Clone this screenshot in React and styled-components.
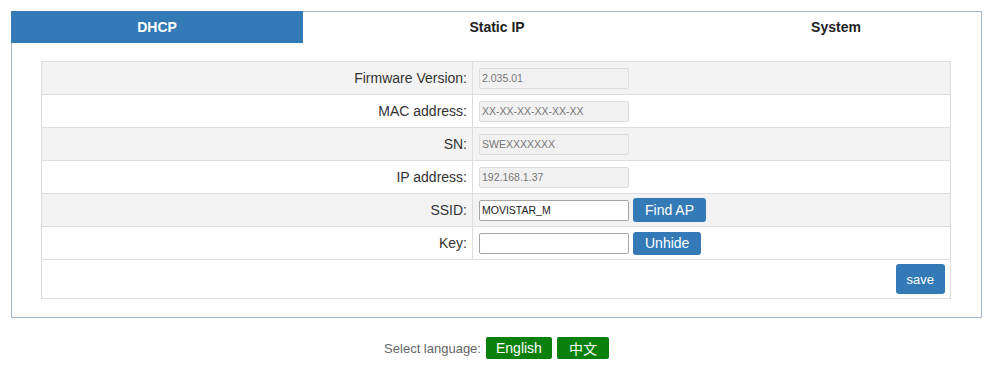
import React from 'react';
import styled, { createGlobalStyle } from 'styled-components';

const GlobalStyle = createGlobalStyle`
  body {
    margin: 0;
    background: #fff;
    font-family: "Liberation Sans", Arial, sans-serif;
    color: #333;
  }
`;

const Page = styled.div`
  padding: 11px 18px 0 11px;
`;

const Panel = styled.div`
  width: 971px;
  box-sizing: border-box;
  border: 1px solid #a3b8cc;
  padding-bottom: 18px;
`;

const Tabs = styled.div`
  display: flex;
  height: 32px;
  margin: -1px 0 0 -1px;
`;

const Tab = styled.div`
  width: ${(p) => p.$w}px;
  flex: ${(p) => (p.$w ? 'none' : '1')};
  display: flex;
  align-items: center;
  justify-content: center;
  font-size: 14px;
  font-weight: bold;
  color: ${(p) => (p.$active ? '#fff' : '#222')};
  background: ${(p) => (p.$active ? '#337ab7' : 'transparent')};
`;

const Body = styled.div`
  padding: 18px 30px 0 29px;
`;

const FormTable = styled.table`
  width: 100%;
  border-collapse: collapse;
  border: 1px solid #dedede;
  font-size: 14px;
`;

const Row = styled.tr`
  height: 33px;
  background: ${(p) => (p.$shade ? '#f3f3f3' : '#fff')};
  border-bottom: 1px solid #dedede;
`;

const Label = styled.td`
  width: 425px;
  text-align: right;
  padding: 0 5px 0 0;
  border-right: 1px solid #dedede;
  color: #333;
`;

const Field = styled.td`
  padding: 0 0 0 6px;
`;

const FieldWrap = styled.div`
  display: flex;
  align-items: center;
  gap: 4px;
`;

const TextInput = styled.input`
  width: 150px;
  height: 21px;
  box-sizing: border-box;
  margin: 0;
  padding: 0 2px;
  font-family: "Liberation Sans", Arial, sans-serif;
  font-size: 10.5px;
  color: ${(p) => (p.readOnly ? '#777' : '#222')};
  background: ${(p) => (p.readOnly ? '#f1f1f1' : '#fff')};
  border: 1px solid ${(p) => (p.readOnly ? '#dcdcdc' : '#a5a5a5')};
  border-radius: 2px;
  outline: none;
`;

const BlueButton = styled.button`
  height: ${(p) => p.$h || 24}px;
  padding: 0 ${(p) => p.$px || 12}px;
  font-family: "Liberation Sans", Arial, sans-serif;
  font-size: ${(p) => p.$fs || 14}px;
  color: #fff;
  background: #337ab7;
  border: none;
  border-radius: 3px;
  cursor: pointer;
`;

const SaveCell = styled.td`
  height: 38px;
  text-align: right;
  padding: 0 5px 0 0;
`;

const LangBar = styled.div`
  width: 971px;
  display: flex;
  justify-content: center;
  align-items: center;
  gap: 5px;
  margin-top: 19px;
  font-size: 13px;
  color: #666;
`;

const LangButton = styled.button`
  height: 22px;
  padding: 0 ${(p) => p.$px}px;
  font-family: "Liberation Sans", "Noto Sans CJK SC", sans-serif;
  font-size: 14px;
  color: #fff;
  background: #0a800a;
  border: none;
  border-radius: 2px;
`;

const rows = [
  { label: 'Firmware Version:', value: '2.035.01', ro: true },
  { label: 'MAC address:', value: 'XX-XX-XX-XX-XX-XX', ro: true },
  { label: 'SN:', value: 'SWEXXXXXXX', ro: true },
  { label: 'IP address:', value: '192.168.1.37', ro: true },
  { label: 'SSID:', value: 'MOVISTAR_M', button: 'Find AP' },
  { label: 'Key:', value: '', button: 'Unhide' },
];

const App = () => {
  return (
    <Page>
      <GlobalStyle />
      <Panel>
        <Tabs>
          <Tab $active $w={292}>DHCP</Tab>
          <Tab $w={388}>Static IP</Tab>
          <Tab>System</Tab>
        </Tabs>
        <Body>
          <FormTable>
            <tbody>
              {rows.map((r, i) => (
                <Row key={r.label} $shade={i % 2 === 0}>
                  <Label>{r.label}</Label>
                  <Field>
                    <FieldWrap>
                      <TextInput readOnly={r.ro} defaultValue={r.value} type="text" />
                      {r.button && (
                        <BlueButton $h={r.button === 'Unhide' ? 23 : 24}>{r.button}</BlueButton>
                      )}
                    </FieldWrap>
                  </Field>
                </Row>
              ))}
              <tr>
                <SaveCell colSpan={2}>
                  <BlueButton $h={30} $px={11} $fs={13}>save</BlueButton>
                </SaveCell>
              </tr>
            </tbody>
          </FormTable>
        </Body>
      </Panel>
      <LangBar>
        Select language:
        <LangButton $px={10}>English</LangButton>
        <LangButton $px={12}>中文</LangButton>
      </LangBar>
    </Page>
  );
};

export default App;
